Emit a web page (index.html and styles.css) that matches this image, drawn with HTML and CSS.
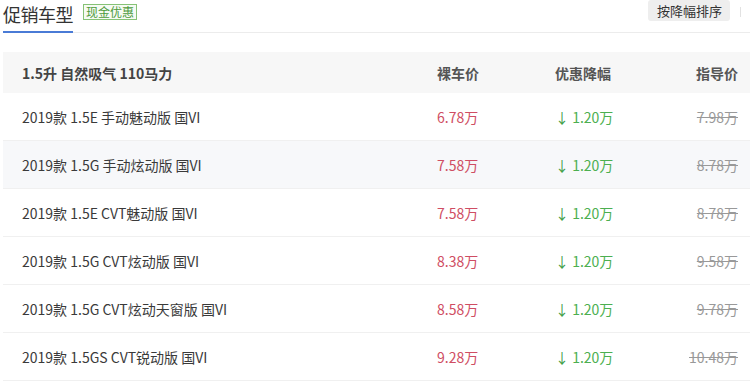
FILE: index.html
```
<!DOCTYPE html>
<html>
  <head>
    <title>促销车型</title>
    <link rel="stylesheet" href="styles.css">
  </head>
  <body>
    <div class="promo">
      <div class="tabbar">
        <div class="tab">促销车型</div>
        <span class="badge">现金优惠</span>
        <div class="sort">
          <span class="sort-btn">按降幅排序</span>
          <span class="sep"></span>
        </div>
      </div>

      <div class="list">
        <div class="row head">
          <div class="name">1.5升 自然吸气 110马力</div>
          <div class="price">裸车价</div>
          <div class="cut">优惠降幅</div>
          <div class="guide">指导价</div>
        </div>
        <div class="row">
          <div class="name">2019款 1.5E 手动魅动版 国VI</div>
          <div class="price">6.78万</div>
          <div class="cut"><span class="arrow">↓</span> 1.20万</div>
          <div class="guide"><s>7.98万</s></div>
        </div>
        <div class="row hover">
          <div class="name">2019款 1.5G 手动炫动版 国VI</div>
          <div class="price">7.58万</div>
          <div class="cut"><span class="arrow">↓</span> 1.20万</div>
          <div class="guide"><s>8.78万</s></div>
        </div>
        <div class="row">
          <div class="name">2019款 1.5E CVT魅动版 国VI</div>
          <div class="price">7.58万</div>
          <div class="cut"><span class="arrow">↓</span> 1.20万</div>
          <div class="guide"><s>8.78万</s></div>
        </div>
        <div class="row">
          <div class="name">2019款 1.5G CVT炫动版 国VI</div>
          <div class="price">8.38万</div>
          <div class="cut"><span class="arrow">↓</span> 1.20万</div>
          <div class="guide"><s>9.58万</s></div>
        </div>
        <div class="row">
          <div class="name">2019款 1.5G CVT炫动天窗版 国VI</div>
          <div class="price">8.58万</div>
          <div class="cut"><span class="arrow">↓</span> 1.20万</div>
          <div class="guide"><s>9.78万</s></div>
        </div>
        <div class="row">
          <div class="name">2019款 1.5GS CVT锐动版 国VI</div>
          <div class="price">9.28万</div>
          <div class="cut"><span class="arrow">↓</span> 1.20万</div>
          <div class="guide"><s>10.48万</s></div>
        </div>
      </div>
    </div>
  </body>
</html>
```

FILE: styles.css
```
body {
  margin: 0;
  background: #fff;
  font-family: "Noto Sans CJK SC", "Liberation Sans", sans-serif;
  color: #333;
}
.promo { padding-left: 3px; }

.tabbar {
  display: flex;
  align-items: flex-start;
  height: 32px;
  border-bottom: 1px solid #ececec;
}
.tab {
  font-size: 18px;
  line-height: 26px;
  height: 30px;
  padding-top: 1px;
  width: 70px;
  color: #333;
  border-bottom: 2px solid #4a7bd6;
  letter-spacing: -0.5px;
}
.badge {
  margin: 4px 0 0 10px;
  font-size: 12px;
  line-height: 14px;
  padding: 0 2px;
  color: #4d9a3c;
  border: 1px solid #86c276;
  background: #f6fbf3;
}
.sort {
  margin-left: auto;
  display: flex;
  align-items: center;
}
.sort-btn {
  background: #eeeeee;
  border-radius: 3px;
  font-size: 13px;
  line-height: 21px;
  padding: 0 8px 0 9px;
  color: #333;
}
.sep {
  width: 1px;
  height: 10px;
  background: #e2e2e2;
  margin: 2px 9px 0 10px;
}

.list { margin-top: 19px; }
.row {
  display: grid;
  grid-template-columns: 415px 118px 1fr 80px;
  align-items: center;
  height: 47px;
  padding: 0 12px 0 19px;
  font-size: 14px;
  color: #3a3a3a;
  border-bottom: 1px solid #f0f0f0;
}
.row.head {
  height: 41px;
  background: #f7f7f7;
  border-bottom: none;
  font-weight: bold;
  color: #444;
}
.row.hover { background: #f7f8fa; }
.price { color: #cf4d63; }
.row.head .price { color: #555; }
.cut { color: #4caf50; }
.row.head .cut { color: #555; }
.arrow { color: #43a047; }
.guide { text-align: right; color: #999; }
.row.head .guide { color: #555; }
```
